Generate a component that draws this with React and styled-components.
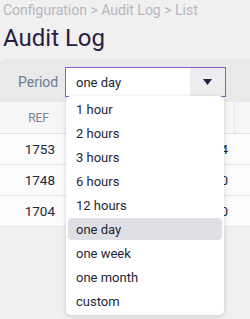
import React from "react";
import styled, { createGlobalStyle } from "styled-components";

const GlobalStyle = createGlobalStyle`
  html, body {
    margin: 0;
    padding: 0;
    background: #f0f0f0;
    font-family: Roboto, "Liberation Sans", sans-serif;
  }
`;

const Page = styled.div`
  width: 250px;
  height: 319px;
  overflow: hidden;
  background: #f0f0f0;
`;

const Breadcrumb = styled.div`
  padding: 1px 0 0 3px;
  font-size: 14px;
  line-height: 18px;
  color: #b7b7c0;
  white-space: nowrap;
`;

const Title = styled.h1`
  margin: 0;
  padding: 3px 0 0 3px;
  font-size: 24px;
  font-weight: 400;
  line-height: 32px;
  color: #2a1c45;
`;

const Panel = styled.div`
  margin-top: 5px;
  background: #e9e9e9;
  border-top-left-radius: 6px;
`;

const FilterRow = styled.div`
  display: flex;
  align-items: center;
  padding: 8px 0 5px 18px;
  gap: 8px;
`;

const Label = styled.span`
  font-size: 14px;
  color: #6f7b8f;
  width: 39px;
`;

const SelectBox = styled.div`
  display: flex;
  width: 159px;
  height: 28px;
  border: 1px solid #8a5bc4;
  background: #fff;
`;

const SelectValue = styled.div`
  flex: 1;
  display: flex;
  align-items: center;
  padding-left: 10px;
  font-size: 13px;
  color: #1f2638;
`;

const SelectButton = styled.div`
  width: 35px;
  display: flex;
  align-items: center;
  justify-content: center;
  background: #ededf0;
`;

const Table = styled.div`
  background: #fbfbfb;
`;

const Row = styled.div`
  display: grid;
  grid-template-columns: 62px 172px 16px;
  height: ${(p) => (p.$head ? "31px" : "30px")};
  align-items: center;
  border-bottom: 1px solid #e4e4e8;
  background: ${(p) => (p.$head ? "#f6f6f6" : "#fbfbfb")};
  font-size: ${(p) => (p.$head ? "12px" : "13.5px")};
  color: ${(p) => (p.$head ? "#7b8496" : "#20283a")};
`;

const Cell = styled.div`
  padding-right: ${(p) => p.$pad || "7px"};
  white-space: nowrap;
  overflow: hidden;
  height: 100%;
  display: flex;
  align-items: center;
  justify-content: flex-end;
  border-left: ${(p) => (p.$line ? "1px solid #e6e6ea" : "none")};
`;

const Menu = styled.ul`
  position: absolute;
  left: 66px;
  top: 96px;
  width: 158px;
  margin: 0;
  padding: 0 0 1px;
  list-style: none;
  background: #fff;
  border-radius: 5px;
  box-shadow: 0 2px 6px rgba(0, 0, 0, 0.12), 0 0 2px rgba(0, 0, 0, 0.08);
`;

const Item = styled.li`
  height: 22px;
  margin: 2px 2px;
  padding-left: 8px;
  display: flex;
  align-items: center;
  border-radius: 4px;
  font-size: 13px;
  color: #1f2638;
  background: ${(p) => (p.$active ? "#dfe0e6" : "transparent")};
`;

const options = [
  "1 hour",
  "2 hours",
  "3 hours",
  "6 hours",
  "12 hours",
  "one day",
  "one week",
  "one month",
  "custom",
];

const rows = [
  { ref: "1753", time: "14:04" },
  { ref: "1748", time: "13:50" },
  { ref: "1704", time: "11:20" },
];

export default function App() {
  return (
    <Page>
      <GlobalStyle />
      <Breadcrumb>Configuration &gt; Audit Log &gt; List</Breadcrumb>
      <Title>Audit Log</Title>
      <Panel>
        <FilterRow>
          <Label>Period</Label>
          <SelectBox>
            <SelectValue>one day</SelectValue>
            <SelectButton>
              <svg width="9" height="6" viewBox="0 0 9 6">
                <path d="M0 0 H9 L4.5 6 Z" fill="#1c2541" />
              </svg>
            </SelectButton>
          </SelectBox>
        </FilterRow>
      </Panel>
      <Table>
        <Row $head>
          <Cell $pad="13px">REF</Cell>
          <Cell $pad="20px"></Cell>
          <Cell $line></Cell>
        </Row>
        {rows.map((r) => (
          <Row key={r.ref}>
            <Cell>{r.ref}</Cell>
            <Cell $pad="6px">{r.time}</Cell>
            <Cell></Cell>
          </Row>
        ))}
      </Table>
      <Menu>
        {options.map((o) => (
          <Item key={o} $active={o === "one day"}>
            {o}
          </Item>
        ))}
      </Menu>
    </Page>
  );
}
